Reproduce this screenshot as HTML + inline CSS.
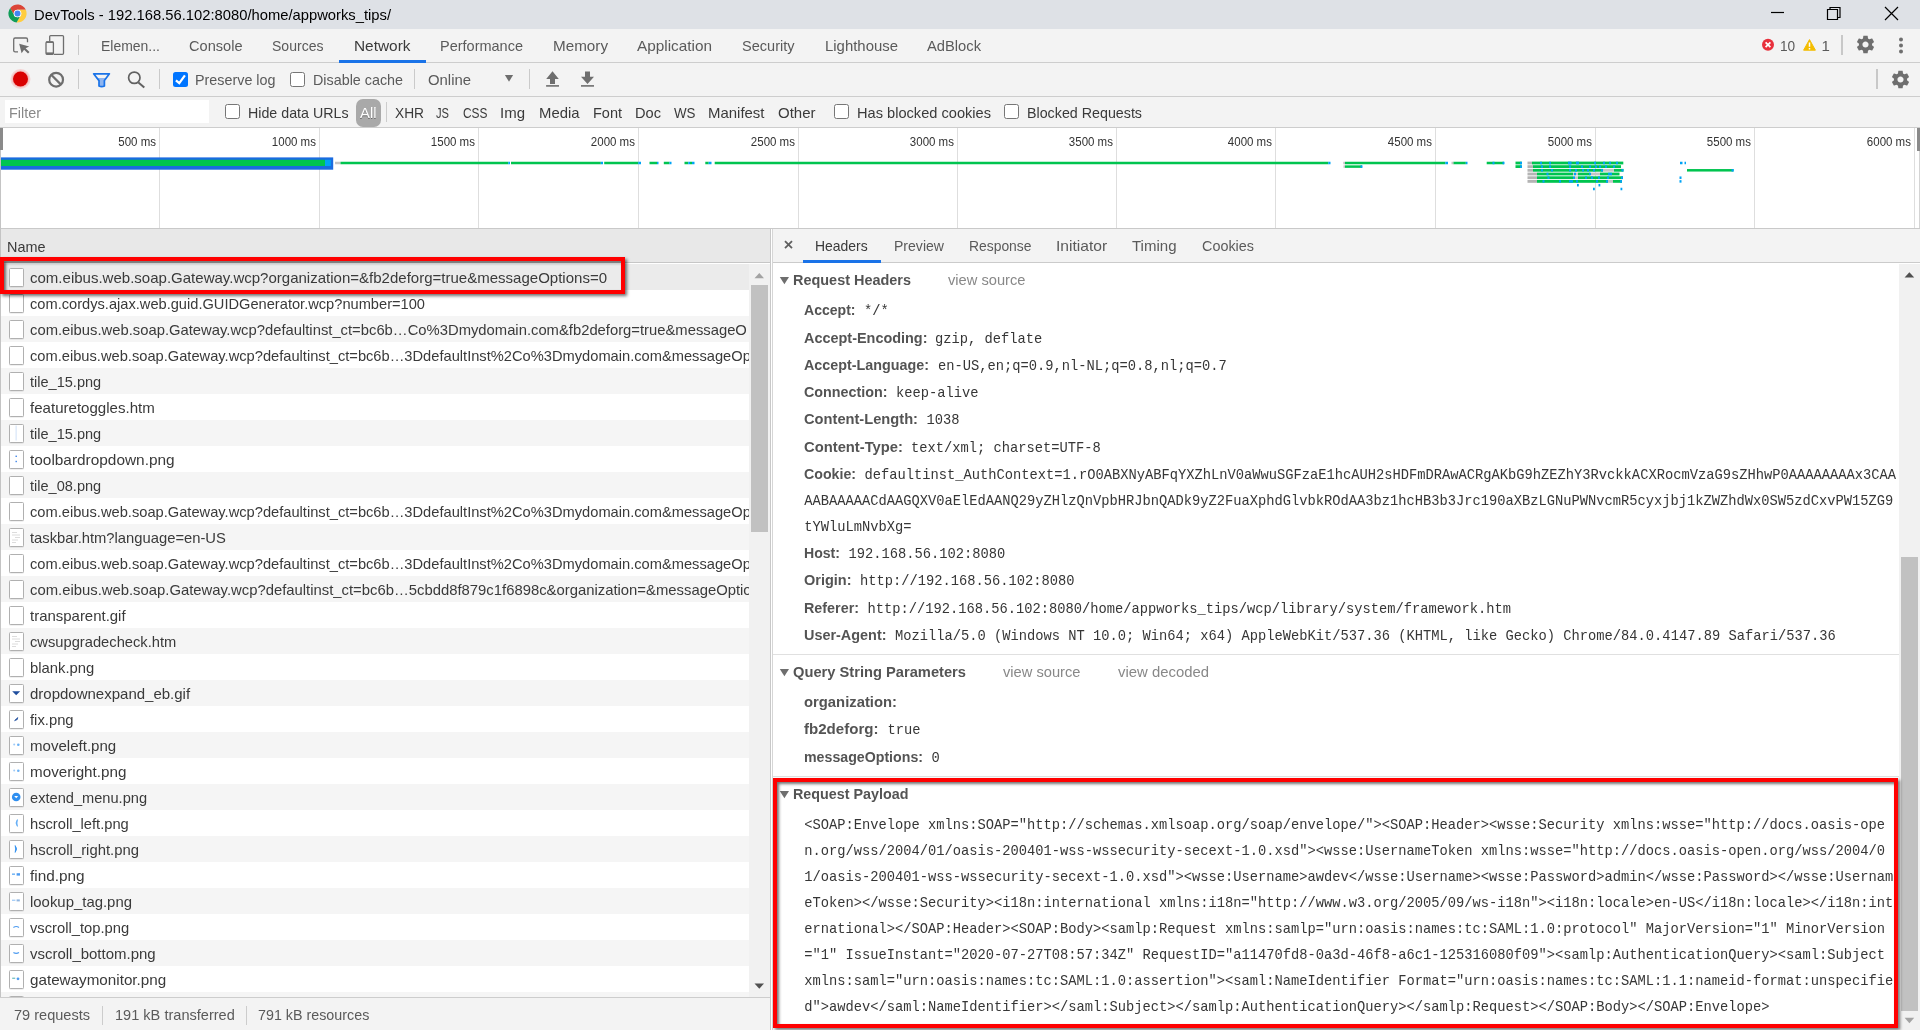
<!DOCTYPE html>
<html lang="en"><head><meta charset="utf-8"><title>DevTools - 192.168.56.102:8080/home/appworks_tips/</title>
<style>
html,body{margin:0;padding:0;}
body{width:1920px;height:1030px;overflow:hidden;background:#fff;position:relative;will-change:transform;font-family:"Liberation Sans",sans-serif;}
div,span,svg{position:absolute;box-sizing:border-box;}
.t{white-space:pre;transform-origin:0 50%;line-height:20px;font-size:15px;color:#3a3a3a;}
.s{font-family:"Liberation Sans",sans-serif;}
.b{font-family:"Liberation Sans",sans-serif;font-weight:bold;color:#545454;}
.m{font-family:"Liberation Mono",monospace;font-size:13.75px;color:#363636;}
.g{font-family:"Liberation Sans",sans-serif;font-size:12.5px;color:#333;}
.dim{color:#5a5a5a;}
.lt{color:#888;}
.wh{color:#fff;}
.ico{border:1.2px solid #b0b0b0;background:#fff;border-radius:1.5px;box-shadow:0 .6px 0 rgba(0,0,0,.12);}
</style></head>
<body>
<div style="left:0;top:0;width:1920px;height:28.5px;background:#dee1e6"></div>
<div style="left:0;top:28.5px;width:1920px;height:34.5px;background:#f3f3f3;border-bottom:1px solid #cdcdcd"></div>
<div style="left:0;top:63px;width:1920px;height:34px;background:#f3f3f3;border-bottom:1px solid #cdcdcd"></div>
<div style="left:0;top:97px;width:1920px;height:31px;background:#f3f3f3;border-bottom:1px solid #cdcdcd"></div>
<div style="left:5px;top:100px;width:204px;height:23px;background:#fff"></div>
<svg style="left:8.1px;top:4.1px" width="19" height="19" viewBox="1 1 46 46">
<path d="M16.21 28.5L6.17 11.12A22 22 0 0 1 44.07 15L24 15A9 9 0 0 0 16.21 28.5Z" fill="#db4437"/>
<path d="M24 15L44.07 15A22 22 0 0 1 21.76 45.88L31.79 28.5A9 9 0 0 0 24 15Z" fill="#ffcd40"/>
<path d="M31.79 28.5L21.76 45.88A22 22 0 0 1 6.17 11.12L16.21 28.5A9 9 0 0 0 31.79 28.5Z" fill="#0f9d58"/>
<circle cx="24" cy="24" r="9.3" fill="#fff"/><circle cx="24" cy="24" r="7.2" fill="#4285f4"/></svg>
<svg style="left:1760px;top:0" width="160" height="29"><g stroke="#000" stroke-width="1.2" fill="none"><path d="M11 12.5H24"/><path d="M67.5 9.5H77.5V19.5H67.5Z"/><path d="M70 9.5V7.5H80V17.5H77.5"/><path d="M125 7L138 20M138 7L125 20"/></g></svg>
<div style="left:338.5px;top:60px;width:87px;height:2.5px;background:#1a73e8"></div>
<svg style="left:0;top:29px" width="80" height="34" viewBox="0 29 80 34" fill="none" stroke="#6e6e6e" stroke-width="1.3">
<path d="M27.5 42.2V39.4Q27.5 38 26.1 38H15.1Q13.7 38 13.7 39.4V50.4Q13.7 51.8 15.1 51.8H18"/>
<path d="M19.2 43.8L29.2 46.4L25.6 48.2L29.5 52.1L28 53.6L24.1 49.7L21.6 53.2Z" fill="#6e6e6e" stroke="none"/>
<path d="M49.7 41.5V36.6Q49.7 35.6 50.7 35.6H62.5Q63.5 35.6 63.5 36.6V53.3Q63.5 54.3 62.5 54.3H54"/>
<rect x="46" y="41.9" width="7.4" height="12.4" rx="1"/><path d="M46 53.4H53.4" stroke-width="2"/><path d="M46 42.2H53.4" stroke-width="1.6"/></svg>
<div style="left:77.9px;top:35px;width:1px;height:20px;background:#cacaca"></div>
<svg style="left:1760px;top:34px" width="160" height="24" viewBox="0 0 160 24">
<circle cx="8" cy="10.8" r="6" fill="#e8303c"/><path d="M5.6 8.4L10.4 13.2M10.4 8.4L5.6 13.2" stroke="#fff" stroke-width="1.7"/>
<path d="M49.5 5.6L55.4 16.2H43.6Z" fill="#f4bd00" stroke="#f4bd00" stroke-width="1" stroke-linejoin="round"/>
<path d="M49.5 8.6V12.8M49.5 13.9V15.4" stroke="#fff" stroke-width="1.5"/>
</svg>
<div style="left:1841.2px;top:35px;width:1.5px;height:20px;background:#c8c8c8"></div>
<svg style="left:1854.7px;top:34.3px" width="21" height="21" viewBox="0 0 24 24"><path fill="#6e6e6e" d="M19.43 12.98c.04-.32.07-.64.07-.98s-.03-.66-.07-.98l2.11-1.65c.19-.15.24-.42.12-.64l-2-3.46c-.12-.22-.39-.3-.61-.22l-2.49 1c-.52-.4-1.08-.73-1.69-.98l-.38-2.65C14.46 2.18 14.25 2 14 2h-4c-.25 0-.46.18-.49.42l-.38 2.65c-.61.25-1.17.59-1.69.98l-2.49-1c-.23-.09-.49 0-.61.22l-2 3.46c-.13.22-.07.49.12.64l2.11 1.65c-.04.32-.07.65-.07.98s.03.66.07.98l-2.11 1.65c-.19.15-.24.42-.12.64l2 3.46c.12.22.39.3.61.22l2.49-1c.52.4 1.08.73 1.69.98l.38 2.65c.03.24.24.42.49.42h4c.25 0 .46-.18.49-.42l.38-2.65c.61-.25 1.17-.59 1.69-.98l2.49 1c.23.09.49 0 .61-.22l2-3.46c.12-.22.07-.49-.12-.64l-2.11-1.65zM12 15.5c-1.93 0-3.5-1.57-3.5-3.5s1.57-3.5 3.5-3.5 3.5 1.57 3.5 3.5-1.57 3.5-3.5 3.5z"/></svg>
<svg style="left:1896px;top:35px" width="10" height="20"><g fill="#6e6e6e"><circle cx="5" cy="4.5" r="2"/><circle cx="5" cy="10.5" r="2"/><circle cx="5" cy="16.5" r="2"/></g></svg>
<svg style="left:0;top:63px" width="620" height="34" viewBox="0 63 620 34">
<circle cx="20.5" cy="79" r="10" fill="#f00" opacity=".13"/><circle cx="20.5" cy="79" r="8.6" fill="#f00" opacity=".12"/><circle cx="20.5" cy="79" r="7.5" fill="#d90000"/>
<circle cx="56.1" cy="79.7" r="6.9" fill="none" stroke="#6e6e6e" stroke-width="2.2"/><path d="M51.2 74.8L61 84.6" stroke="#6e6e6e" stroke-width="2.2"/>
<path d="M96.5 78H106.5L104.4 81V86.2Q101.7 87.6 99 86.2V81Z" fill="#8eb5f0"/>
<path d="M93.6 73.8H109.4L104.4 80.6V86Q101.7 87.4 99 86V80.6Z" fill="none" stroke="#1a73e8" stroke-width="1.7" stroke-linejoin="round"/>
<circle cx="134.3" cy="77.75" r="5.7" fill="none" stroke="#616161" stroke-width="1.7"/><path d="M138.4 82.4L144.3 87.6" stroke="#616161" stroke-width="2"/>
<path d="M504.9 75H513.1L509 81.8Z" fill="#6e6e6e"/>
<path d="M552.5 71.2L558.8 78.9H555V83.9H550V78.9H546.2Z" fill="#6e6e6e"/><rect x="546.1" y="85.1" width="12.9" height="1.6" fill="#6e6e6e"/>
<path d="M587.5 83.9L594 76.7H590V71.4H585V76.7H581Z" fill="#6e6e6e"/><rect x="581" y="85.1" width="13" height="1.6" fill="#6e6e6e"/>
</svg>
<div style="left:77.9px;top:69px;width:1px;height:20px;background:#cacaca"></div>
<div style="left:158.9px;top:69px;width:1px;height:20px;background:#cacaca"></div>
<div style="left:413.9px;top:69px;width:1px;height:20px;background:#cacaca"></div>
<div style="left:528.9px;top:69px;width:1px;height:20px;background:#cacaca"></div>
<div style="left:1876.1px;top:69px;width:1.5px;height:20px;background:#c8c8c8"></div>
<svg style="left:1890px;top:68.5px" width="21" height="21" viewBox="0 0 24 24"><path fill="#6e6e6e" d="M19.43 12.98c.04-.32.07-.64.07-.98s-.03-.66-.07-.98l2.11-1.65c.19-.15.24-.42.12-.64l-2-3.46c-.12-.22-.39-.3-.61-.22l-2.49 1c-.52-.4-1.08-.73-1.69-.98l-.38-2.65C14.46 2.18 14.25 2 14 2h-4c-.25 0-.46.18-.49.42l-.38 2.65c-.61.25-1.17.59-1.69.98l-2.49-1c-.23-.09-.49 0-.61.22l-2 3.46c-.13.22-.07.49.12.64l2.11 1.65c-.04.32-.07.65-.07.98s.03.66.07.98l-2.11 1.65c-.19.15-.24.42-.12.64l2 3.46c.12.22.39.3.61.22l2.49-1c.52.4 1.08.73 1.69.98l.38 2.65c.03.24.24.42.49.42h4c.25 0 .46-.18.49-.42l.38-2.65c.61-.25 1.17-.59 1.69-.98l2.49 1c.23.09.49 0 .61-.22l2-3.46c.12-.22.07-.49-.12-.64l-2.11-1.65zM12 15.5c-1.93 0-3.5-1.57-3.5-3.5s1.57-3.5 3.5-3.5 3.5 1.57 3.5 3.5-1.57 3.5-3.5 3.5z"/></svg>
<svg style="left:173px;top:72px" width="15" height="15" viewBox="0 0 15 15"><rect width="15" height="15" rx="2.5" fill="#0075ff"/><path d="M2.9 8.3L6.3 11.2L11.9 3.4" stroke="#fff" stroke-width="2.2" fill="none"/></svg>
<div style="left:290px;top:72px;width:15px;height:15px;border:1.25px solid #767676;border-radius:2.5px;background:#fff"></div>
<div style="left:225px;top:104px;width:15px;height:15px;border:1.25px solid #767676;border-radius:2.5px;background:#fff"></div>
<div style="left:356px;top:99px;width:25px;height:28px;background:#a9a9a9;border-radius:7px"></div>
<div style="left:386px;top:102px;width:1px;height:20px;background:#ccc"></div>
<div style="left:834px;top:104px;width:15px;height:15px;border:1.25px solid #767676;border-radius:2.5px;background:#fff"></div>
<div style="left:1004px;top:104px;width:15px;height:15px;border:1.25px solid #767676;border-radius:2.5px;background:#fff"></div>
<div style="left:0;top:128px;width:1920px;height:100px;background:#fff"></div>
<div style="left:0;top:228px;width:1920px;height:1.3px;background:#c9c9c9"></div>
<div style="left:159px;top:128px;width:1px;height:100px;background:#dedede"></div>
<div style="left:319px;top:128px;width:1px;height:100px;background:#dedede"></div>
<div style="left:478px;top:128px;width:1px;height:100px;background:#dedede"></div>
<div style="left:638px;top:128px;width:1px;height:100px;background:#dedede"></div>
<div style="left:798px;top:128px;width:1px;height:100px;background:#dedede"></div>
<div style="left:957px;top:128px;width:1px;height:100px;background:#dedede"></div>
<div style="left:1116px;top:128px;width:1px;height:100px;background:#dedede"></div>
<div style="left:1275px;top:128px;width:1px;height:100px;background:#dedede"></div>
<div style="left:1435px;top:128px;width:1px;height:100px;background:#dedede"></div>
<div style="left:1595px;top:128px;width:1px;height:100px;background:#dedede"></div>
<div style="left:1754px;top:128px;width:1px;height:100px;background:#dedede"></div>
<div style="left:1914px;top:128px;width:1px;height:100px;background:#dedede"></div>
<div style="left:1917px;top:128px;width:3px;height:23px;background:#8a8a8a"></div>
<svg style="left:0;top:128px" width="1920" height="100" viewBox="0 128 1920 100" shape-rendering="auto"><rect x="0" y="157.4" width="333.2" height="12.3" fill="#1a6be0"/><rect x="0" y="159.8" width="325" height="6.2" fill="#00c44f"/><rect x="325" y="159.8" width="5.8" height="6.2" fill="#00a3f5"/><rect x="335" y="161.75" width="5.5" height="2.5" fill="#c4c4c4"/><rect x="340.5" y="161.75" width="167.8" height="2.5" fill="#00c44f"/><rect x="511" y="161.75" width="89.8" height="2.5" fill="#00c44f"/><rect x="604.2" y="161.75" width="34.1" height="2.5" fill="#00c44f"/><rect x="649.5" y="161.75" width="7.5" height="2.5" fill="#00c44f"/><rect x="663.8" y="161.75" width="5.7" height="2.5" fill="#00c44f"/><rect x="684.5" y="161.75" width="3.8" height="2.5" fill="#00c44f"/><rect x="690" y="161.75" width="2.0" height="2.5" fill="#00c44f"/><rect x="705.3" y="161.75" width="3.4" height="2.5" fill="#00c44f"/><rect x="714.7" y="161.75" width="613.6" height="2.5" fill="#00c44f"/><rect x="1345" y="161.75" width="100.3" height="2.5" fill="#00c44f"/><rect x="1453.3" y="161.75" width="12.5" height="2.5" fill="#00c44f"/><rect x="1486.7" y="161.75" width="17.3" height="2.5" fill="#00c44f"/><rect x="1515.5" y="161.60" width="6.2" height="2.8" fill="#00c44f"/><rect x="1532" y="161.60" width="91.3" height="2.8" fill="#00c44f"/><rect x="508.3" y="161.75" width="1.7" height="2.5" fill="#00a3f5"/><rect x="600.8" y="161.75" width="2.2" height="2.5" fill="#00a3f5"/><rect x="638.3" y="161.75" width="2.7" height="2.5" fill="#00a3f5"/><rect x="657" y="161.75" width="1.5" height="2.5" fill="#00a3f5"/><rect x="669.5" y="161.75" width="2.0" height="2.5" fill="#00a3f5"/><rect x="688.3" y="161.75" width="1.7" height="2.5" fill="#00a3f5"/><rect x="692" y="161.75" width="2.5" height="2.5" fill="#00a3f5"/><rect x="708.7" y="161.75" width="2.8" height="2.5" fill="#00a3f5"/><rect x="1328.3" y="161.75" width="2.2" height="2.5" fill="#00a3f5"/><rect x="1445.3" y="161.75" width="2.7" height="2.5" fill="#00a3f5"/><rect x="1465.8" y="161.75" width="1.7" height="2.5" fill="#00a3f5"/><rect x="1492.5" y="161.75" width="2.0" height="2.5" fill="#00a3f5"/><rect x="1502.5" y="161.75" width="2.0" height="2.5" fill="#00a3f5"/><rect x="1520" y="161.75" width="2.0" height="2.5" fill="#00a3f5"/><rect x="1540" y="161.75" width="2.0" height="2.5" fill="#00a3f5"/><rect x="1549" y="161.75" width="2.0" height="2.5" fill="#00a3f5"/><rect x="1568" y="161.60" width="3.5" height="2.8" fill="#00a3f5"/><rect x="1576" y="161.60" width="3.0" height="2.8" fill="#00a3f5"/><rect x="1594" y="161.75" width="2.0" height="2.5" fill="#00a3f5"/><rect x="1603" y="161.75" width="2.0" height="2.5" fill="#00a3f5"/><rect x="1609" y="161.75" width="2.0" height="2.5" fill="#00a3f5"/><rect x="1616" y="161.75" width="2.0" height="2.5" fill="#00a3f5"/><rect x="1680" y="161.75" width="2.5" height="2.5" fill="#00a3f5"/><rect x="1684.5" y="161.75" width="1.5" height="2.5" fill="#00a3f5"/><rect x="1343.3" y="161.75" width="1.7" height="2.5" fill="#c4c4c4"/><rect x="1451.5" y="161.75" width="1.8" height="2.5" fill="#c4c4c4"/><rect x="1527.5" y="161.60" width="4.5" height="2.8" fill="#b4b4b4"/><rect x="1343.5" y="165.35" width="1.5" height="2.5" fill="#c4c4c4"/><rect x="1345" y="165.35" width="17.0" height="2.5" fill="#00c44f"/><rect x="1360.5" y="165.35" width="2.0" height="2.5" fill="#00a3f5"/><rect x="1515.5" y="165.20" width="6.2" height="2.8" fill="#00c44f"/><rect x="1520" y="165.35" width="2.0" height="2.5" fill="#00a3f5"/><rect x="1527.5" y="165.20" width="5.5" height="2.8" fill="#b4b4b4"/><rect x="1533" y="165.20" width="88.0" height="2.8" fill="#00c44f"/><rect x="1541" y="165.35" width="2.0" height="2.5" fill="#00a3f5"/><rect x="1549" y="165.35" width="2.0" height="2.5" fill="#00a3f5"/><rect x="1569" y="165.35" width="2.0" height="2.5" fill="#00a3f5"/><rect x="1581" y="165.35" width="2.0" height="2.5" fill="#00a3f5"/><rect x="1589" y="165.35" width="2.0" height="2.5" fill="#00a3f5"/><rect x="1595" y="165.35" width="2.0" height="2.5" fill="#00a3f5"/><rect x="1599" y="165.35" width="2.0" height="2.5" fill="#00a3f5"/><rect x="1605" y="165.35" width="2.0" height="2.5" fill="#00a3f5"/><rect x="1613" y="165.35" width="2.0" height="2.5" fill="#00a3f5"/><rect x="1527.5" y="168.90" width="5.5" height="2.8" fill="#b4b4b4"/><rect x="1533" y="168.90" width="70.0" height="2.8" fill="#00c44f"/><rect x="1603" y="168.90" width="11.0" height="2.8" fill="#c4c4c4"/><rect x="1614" y="168.90" width="9.5" height="2.8" fill="#00c44f"/><rect x="1541" y="169.05" width="2.0" height="2.5" fill="#00a3f5"/><rect x="1551" y="169.05" width="2.0" height="2.5" fill="#00a3f5"/><rect x="1569" y="169.05" width="2.0" height="2.5" fill="#00a3f5"/><rect x="1575" y="169.05" width="2.0" height="2.5" fill="#00a3f5"/><rect x="1582" y="169.05" width="2.0" height="2.5" fill="#00a3f5"/><rect x="1587" y="169.05" width="2.0" height="2.5" fill="#00a3f5"/><rect x="1593" y="169.05" width="2.0" height="2.5" fill="#00a3f5"/><rect x="1601" y="169.05" width="2.0" height="2.5" fill="#00a3f5"/><rect x="1621.5" y="169.05" width="2.0" height="2.5" fill="#00a3f5"/><rect x="1687" y="169.05" width="46.3" height="2.5" fill="#00c44f"/><rect x="1731.5" y="169.05" width="2.3" height="2.5" fill="#00a3f5"/><rect x="1527.5" y="172.60" width="9.5" height="2.8" fill="#b4b4b4"/><rect x="1537" y="172.60" width="36.0" height="2.8" fill="#00c44f"/><rect x="1573" y="172.60" width="5.0" height="2.8" fill="#c4c4c4"/><rect x="1578" y="172.60" width="12.0" height="2.8" fill="#00c44f"/><rect x="1590" y="172.60" width="10.0" height="2.8" fill="#c4c4c4"/><rect x="1600" y="172.60" width="19.5" height="2.8" fill="#00c44f"/><rect x="1546.5" y="172.75" width="2.0" height="2.5" fill="#00a3f5"/><rect x="1574" y="172.75" width="2.0" height="2.5" fill="#00a3f5"/><rect x="1589" y="172.75" width="2.0" height="2.5" fill="#00a3f5"/><rect x="1608" y="172.75" width="2.0" height="2.5" fill="#00a3f5"/><rect x="1610" y="172.75" width="2.0" height="2.5" fill="#00a3f5"/><rect x="1527.5" y="176.30" width="9.5" height="2.8" fill="#b4b4b4"/><rect x="1537" y="176.30" width="36.0" height="2.8" fill="#00c44f"/><rect x="1573" y="176.30" width="5.0" height="2.8" fill="#c4c4c4"/><rect x="1578" y="176.30" width="45.0" height="2.8" fill="#00c44f"/><rect x="1547.5" y="176.45" width="2.0" height="2.5" fill="#00a3f5"/><rect x="1573" y="176.45" width="2.0" height="2.5" fill="#00a3f5"/><rect x="1585" y="176.45" width="2.0" height="2.5" fill="#00a3f5"/><rect x="1591" y="176.45" width="2.0" height="2.5" fill="#00a3f5"/><rect x="1598" y="176.45" width="2.0" height="2.5" fill="#00a3f5"/><rect x="1607" y="176.45" width="2.0" height="2.5" fill="#00a3f5"/><rect x="1621" y="176.45" width="2.0" height="2.5" fill="#00a3f5"/><rect x="1679.5" y="176.45" width="2.0" height="2.5" fill="#00a3f5"/><rect x="1527.5" y="180.00" width="9.5" height="2.8" fill="#b4b4b4"/><rect x="1537" y="180.00" width="71.0" height="2.8" fill="#00c44f"/><rect x="1608" y="180.00" width="5.0" height="2.8" fill="#c4c4c4"/><rect x="1613" y="180.00" width="9.0" height="2.8" fill="#00c44f"/><rect x="1542.5" y="180.15" width="2.0" height="2.5" fill="#00a3f5"/><rect x="1559" y="180.15" width="2.0" height="2.5" fill="#00a3f5"/><rect x="1569" y="180.15" width="2.0" height="2.5" fill="#00a3f5"/><rect x="1571" y="180.15" width="2.0" height="2.5" fill="#00a3f5"/><rect x="1576" y="180.15" width="2.0" height="2.5" fill="#00a3f5"/><rect x="1596" y="180.15" width="2.0" height="2.5" fill="#00a3f5"/><rect x="1606" y="180.15" width="2.0" height="2.5" fill="#00a3f5"/><rect x="1620" y="180.15" width="2.0" height="2.5" fill="#00a3f5"/><rect x="1679.5" y="180.15" width="2.0" height="2.5" fill="#00a3f5"/><rect x="1577" y="183.95" width="1.8" height="2.5" fill="#00a3f5"/><rect x="1598.5" y="183.95" width="1.8" height="2.5" fill="#00a3f5"/><rect x="1593" y="187.75" width="1.8" height="2.5" fill="#00a3f5"/><rect x="1620.5" y="187.75" width="1.8" height="2.5" fill="#00a3f5"/></svg>
<div style="left:0;top:229.3px;width:770px;height:34px;background:#e8e8e8;border-bottom:1.3px solid #c6c6c6"></div>
<div id="rows" style="left:0;top:263px;width:749px;height:734.4px;overflow:hidden">
<div style="left:0;top:0.6px;width:749px;height:26px;background:#ebebeb"></div>
<div class="ico" style="left:8.6px;top:5.3px;width:15px;height:18.4px"></div>
<div style="left:0;top:26.6px;width:749px;height:26px;background:#fff"></div>
<div class="ico" style="left:8.6px;top:31.3px;width:15px;height:18.4px"></div>
<div style="left:0;top:52.6px;width:749px;height:26px;background:#f5f5f5"></div>
<div class="ico" style="left:8.6px;top:57.3px;width:15px;height:18.4px"></div>
<div style="left:0;top:78.6px;width:749px;height:26px;background:#fff"></div>
<div class="ico" style="left:8.6px;top:83.3px;width:15px;height:18.4px"></div>
<div style="left:0;top:104.6px;width:749px;height:26px;background:#f5f5f5"></div>
<div class="ico" style="left:8.6px;top:109.3px;width:15px;height:18.4px"></div>
<div style="left:0;top:130.6px;width:749px;height:26px;background:#fff"></div>
<div class="ico" style="left:8.6px;top:135.3px;width:15px;height:18.4px"></div>
<div style="left:0;top:156.6px;width:749px;height:26px;background:#f5f5f5"></div>
<div class="ico" style="left:8.6px;top:161.3px;width:15px;height:18.4px"></div>
<svg style="left:8.5px;top:161.2px" width="15" height="18" viewBox="0 0 15 18"><rect x="6.6" y="1.5" width="1" height="15" fill="#cfe0f7"/></svg>
<div style="left:0;top:182.6px;width:749px;height:26px;background:#fff"></div>
<div class="ico" style="left:8.6px;top:187.3px;width:15px;height:18.4px"></div>
<svg style="left:8.5px;top:187.2px" width="15" height="18" viewBox="0 0 15 18"><rect x="6.5" y="5.6" width="1.4" height="1.4" fill="#3b82e8"/><rect x="6.5" y="10.8" width="1.4" height="1.4" fill="#3b82e8"/></svg>
<div style="left:0;top:208.6px;width:749px;height:26px;background:#f5f5f5"></div>
<div class="ico" style="left:8.6px;top:213.3px;width:15px;height:18.4px"></div>
<div style="left:0;top:234.6px;width:749px;height:26px;background:#fff"></div>
<div class="ico" style="left:8.6px;top:239.3px;width:15px;height:18.4px"></div>
<div style="left:0;top:260.6px;width:749px;height:26px;background:#f5f5f5"></div>
<div class="ico" style="left:8.6px;top:265.3px;width:15px;height:18.4px"></div>
<svg style="left:8.5px;top:265.2px" width="15" height="18" viewBox="0 0 15 18"><g stroke="#dcdcdc" stroke-width="1"><path d="M3 4.5H8M3 7H11M6 9.5H11M3 12H9M3 14.5H7"/></g></svg>
<div style="left:0;top:286.6px;width:749px;height:26px;background:#fff"></div>
<div class="ico" style="left:8.6px;top:291.3px;width:15px;height:18.4px"></div>
<div style="left:0;top:312.6px;width:749px;height:26px;background:#f5f5f5"></div>
<div class="ico" style="left:8.6px;top:317.3px;width:15px;height:18.4px"></div>
<div style="left:0;top:338.6px;width:749px;height:26px;background:#fff"></div>
<div class="ico" style="left:8.6px;top:343.3px;width:15px;height:18.4px"></div>
<div style="left:0;top:364.6px;width:749px;height:26px;background:#f5f5f5"></div>
<div class="ico" style="left:8.6px;top:369.3px;width:15px;height:18.4px"></div>
<svg style="left:8.5px;top:369.2px" width="15" height="18" viewBox="0 0 15 18"><g stroke="#dcdcdc" stroke-width="1"><path d="M3 4.5H8M3 7H11M6 9.5H11M3 12H9M3 14.5H7"/></g></svg>
<div style="left:0;top:390.6px;width:749px;height:26px;background:#fff"></div>
<div class="ico" style="left:8.6px;top:395.3px;width:15px;height:18.4px"></div>
<div style="left:0;top:416.6px;width:749px;height:26px;background:#f5f5f5"></div>
<div class="ico" style="left:8.6px;top:421.3px;width:15px;height:18.4px"></div>
<svg style="left:8.5px;top:421.2px" width="15" height="18" viewBox="0 0 15 18"><path d="M3.2 7.2H11.2L7.2 11.2Z" fill="#1f4e9e"/></svg>
<div style="left:0;top:442.6px;width:749px;height:26px;background:#fff"></div>
<div class="ico" style="left:8.6px;top:447.3px;width:15px;height:18.4px"></div>
<svg style="left:8.5px;top:447.2px" width="15" height="18" viewBox="0 0 15 18"><path d="M5.6 10.6L8.8 7.6L8.2 9.6Z" fill="#1f4e9e" stroke="#1f4e9e" stroke-width=".8"/></svg>
<div style="left:0;top:468.6px;width:749px;height:26px;background:#f5f5f5"></div>
<div class="ico" style="left:8.6px;top:473.3px;width:15px;height:18.4px"></div>
<svg style="left:8.5px;top:473.2px" width="15" height="18" viewBox="0 0 15 18"><circle cx="5.2" cy="8.6" r="1" fill="#9cc9f7"/><circle cx="9.3" cy="8.8" r="1.3" fill="#6cb2f5"/></svg>
<div style="left:0;top:494.6px;width:749px;height:26px;background:#fff"></div>
<div class="ico" style="left:8.6px;top:499.3px;width:15px;height:18.4px"></div>
<svg style="left:8.5px;top:499.2px" width="15" height="18" viewBox="0 0 15 18"><circle cx="5.2" cy="8.6" r="1" fill="#9cc9f7"/><circle cx="9.3" cy="8.8" r="1.3" fill="#6cb2f5"/></svg>
<div style="left:0;top:520.6px;width:749px;height:26px;background:#f5f5f5"></div>
<div class="ico" style="left:8.6px;top:525.3px;width:15px;height:18.4px"></div>
<svg style="left:8.5px;top:525.2px" width="15" height="18" viewBox="0 0 15 18"><circle cx="7.2" cy="9" r="4.3" fill="#2f8ff0"/><path d="M5.2 8L7.2 10.3L9.2 8Z" fill="#fff"/></svg>
<div style="left:0;top:546.6px;width:749px;height:26px;background:#fff"></div>
<div class="ico" style="left:8.6px;top:551.3px;width:15px;height:18.4px"></div>
<svg style="left:8.5px;top:551.2px" width="15" height="18" viewBox="0 0 15 18"><path d="M8.4 5.6Q5.6 9 8.4 12.4Q7.6 9 8.4 5.6Z" fill="#63adf5" stroke="#63adf5" stroke-width=".8"/></svg>
<div style="left:0;top:572.6px;width:749px;height:26px;background:#f5f5f5"></div>
<div class="ico" style="left:8.6px;top:577.3px;width:15px;height:18.4px"></div>
<svg style="left:8.5px;top:577.2px" width="15" height="18" viewBox="0 0 15 18"><path d="M6.2 5.6Q9 9 6.2 12.4Q7 9 6.2 5.6Z" fill="#2f8ff0" stroke="#2f8ff0" stroke-width=".8"/></svg>
<div style="left:0;top:598.6px;width:749px;height:26px;background:#fff"></div>
<div class="ico" style="left:8.6px;top:603.3px;width:15px;height:18.4px"></div>
<svg style="left:8.5px;top:603.2px" width="15" height="18" viewBox="0 0 15 18"><rect x="3" y="7.4" width="3" height="1.6" fill="#7ab8f5"/><rect x="7.6" y="7.2" width="3.4" height="2.4" fill="#4f9cf0"/></svg>
<div style="left:0;top:624.6px;width:749px;height:26px;background:#f5f5f5"></div>
<div class="ico" style="left:8.6px;top:629.3px;width:15px;height:18.4px"></div>
<svg style="left:8.5px;top:629.2px" width="15" height="18" viewBox="0 0 15 18"><rect x="3" y="7.6" width="3.4" height="1.4" fill="#a8cff8"/><rect x="7.6" y="7.4" width="3.2" height="2" fill="#8fb5e0"/></svg>
<div style="left:0;top:650.6px;width:749px;height:26px;background:#fff"></div>
<div class="ico" style="left:8.6px;top:655.3px;width:15px;height:18.4px"></div>
<svg style="left:8.5px;top:655.2px" width="15" height="18" viewBox="0 0 15 18"><path d="M4.4 9.4Q7.2 7.6 10 9.4" fill="none" stroke="#4f9cf0" stroke-width="1.2"/></svg>
<div style="left:0;top:676.6px;width:749px;height:26px;background:#f5f5f5"></div>
<div class="ico" style="left:8.6px;top:681.3px;width:15px;height:18.4px"></div>
<svg style="left:8.5px;top:681.2px" width="15" height="18" viewBox="0 0 15 18"><path d="M4.4 8.4Q7.2 10.2 10 8.4" fill="none" stroke="#4f9cf0" stroke-width="1.2"/></svg>
<div style="left:0;top:702.6px;width:749px;height:26px;background:#fff"></div>
<div class="ico" style="left:8.6px;top:707.3px;width:15px;height:18.4px"></div>
<svg style="left:8.5px;top:707.2px" width="15" height="18" viewBox="0 0 15 18"><rect x="3.2" y="7.6" width="3" height="1.4" fill="#7fc4c4"/><circle cx="9" cy="8.8" r="1.4" fill="#4f9cf0"/></svg>
<div style="left:0;top:728.6px;width:749px;height:26px;background:#f5f5f5"></div>
<div class="ico" style="left:8.6px;top:733.3px;width:15px;height:18.4px"></div>
<span id="t45" class="t s" style="left:30.40px;top:5.00px;transform:scaleX(1.0012);">com.eibus.web.soap.Gateway.wcp?organization=&amp;fb2deforg=true&amp;messageOptions=0</span>
<span id="t46" class="t s" style="left:30.40px;top:31.00px;transform:scaleX(0.9758);">com.cordys.ajax.web.guid.GUIDGenerator.wcp?number=100</span>
<span id="t47" class="t s" style="left:30.40px;top:57.00px;transform:scaleX(0.9864);">com.eibus.web.soap.Gateway.wcp?defaultinst_ct=bc6b…Co%3Dmydomain.com&amp;fb2deforg=true&amp;messageO</span>
<span id="t48" class="t s" style="left:30.40px;top:83.00px;transform:scaleX(0.9778);">com.eibus.web.soap.Gateway.wcp?defaultinst_ct=bc6b…3DdefaultInst%2Co%3Dmydomain.com&amp;messageOp</span>
<span id="t49" class="t s" style="left:30.40px;top:109.00px;transform:scaleX(0.9699);">tile_15.png</span>
<span id="t50" class="t s" style="left:30.40px;top:135.00px;transform:scaleX(1.0044);">featuretoggles.htm</span>
<span id="t51" class="t s" style="left:30.40px;top:161.00px;transform:scaleX(0.9699);">tile_15.png</span>
<span id="t52" class="t s" style="left:30.40px;top:187.00px;transform:scaleX(1.0259);">toolbardropdown.png</span>
<span id="t53" class="t s" style="left:30.40px;top:213.00px;transform:scaleX(0.9699);">tile_08.png</span>
<span id="t54" class="t s" style="left:30.40px;top:239.00px;transform:scaleX(0.9778);">com.eibus.web.soap.Gateway.wcp?defaultinst_ct=bc6b…3DdefaultInst%2Co%3Dmydomain.com&amp;messageOp</span>
<span id="t55" class="t s" style="left:30.40px;top:265.00px;transform:scaleX(0.9850);">taskbar.htm?language=en-US</span>
<span id="t56" class="t s" style="left:30.40px;top:291.00px;transform:scaleX(0.9778);">com.eibus.web.soap.Gateway.wcp?defaultinst_ct=bc6b…3DdefaultInst%2Co%3Dmydomain.com&amp;messageOp</span>
<span id="t57" class="t s" style="left:30.40px;top:317.00px;transform:scaleX(0.9894);">com.eibus.web.soap.Gateway.wcp?defaultinst_ct=bc6b…5cbdd8f879c1f6898c&amp;organization=&amp;messageOptio</span>
<span id="t58" class="t s" style="left:30.40px;top:343.00px;transform:scaleX(0.9970);">transparent.gif</span>
<span id="t59" class="t s" style="left:30.40px;top:369.00px;transform:scaleX(0.9802);">cwsupgradecheck.htm</span>
<span id="t60" class="t s" style="left:30.40px;top:395.00px;transform:scaleX(0.9883);">blank.png</span>
<span id="t61" class="t s" style="left:30.40px;top:421.00px;transform:scaleX(0.9997);">dropdownexpand_eb.gif</span>
<span id="t62" class="t s" style="left:30.40px;top:447.00px;transform:scaleX(0.9864);">fix.png</span>
<span id="t63" class="t s" style="left:30.40px;top:473.00px;transform:scaleX(1.0036);">moveleft.png</span>
<span id="t64" class="t s" style="left:30.40px;top:499.00px;transform:scaleX(1.0141);">moveright.png</span>
<span id="t65" class="t s" style="left:30.40px;top:525.00px;transform:scaleX(0.9749);">extend_menu.png</span>
<span id="t66" class="t s" style="left:30.40px;top:551.00px;transform:scaleX(0.9791);">hscroll_left.png</span>
<span id="t67" class="t s" style="left:30.40px;top:577.00px;transform:scaleX(0.9894);">hscroll_right.png</span>
<span id="t68" class="t s" style="left:30.40px;top:603.00px;transform:scaleX(1.0227);">find.png</span>
<span id="t69" class="t s" style="left:30.40px;top:629.00px;transform:scaleX(0.9942);">lookup_tag.png</span>
<span id="t70" class="t s" style="left:30.40px;top:655.00px;transform:scaleX(0.9831);">vscroll_top.png</span>
<span id="t71" class="t s" style="left:30.40px;top:681.00px;transform:scaleX(0.9976);">vscroll_bottom.png</span>
<span id="t72" class="t s" style="left:30.40px;top:707.00px;transform:scaleX(1.0144);">gatewaymonitor.png</span>
</div>
<div style="left:749px;top:263.6px;width:21px;height:734px;background:#f1f1f1"></div>
<div style="left:751px;top:285px;width:17px;height:247px;background:#c1c1c1"></div>
<svg style="left:749px;top:263.6px" width="20" height="734"><path d="M5.5 14.2L10.3 9L15 14.2Z" fill="#a3a3a3"/><path d="M5.5 719.5L10.3 724.7L15 719.5Z" fill="#505050"/></svg>
<div style="left:770px;top:229.3px;width:3px;height:801px;background:#fff"></div>
<div style="left:770px;top:229.3px;width:1px;height:801px;background:#c8c8c8"></div>
<div style="left:772px;top:229.3px;width:1px;height:801px;background:#d6d6d6"></div>
<div style="left:0;top:128px;width:1px;height:902px;background:#c4c4c4"></div>
<div style="left:0;top:128px;width:2.5px;height:22px;background:#8a8a8a"></div>
<div style="left:1919px;top:151px;width:1px;height:77px;background:#d4d4d4"></div>
<div style="left:0;top:997.4px;width:770px;height:33px;background:#f3f3f3;border-top:1.3px solid #cdcdcd"></div>
<div style="left:101.5px;top:1006px;width:1.2px;height:19px;background:#ccc"></div>
<div style="left:246px;top:1006px;width:1.2px;height:19px;background:#ccc"></div>
<div style="left:773px;top:229.3px;width:1147px;height:34.2px;background:#f3f3f3;border-bottom:1.3px solid #cbcbcb"></div>
<div style="left:773px;top:263.1px;width:1126px;height:767px;background:#fff"></div>
<svg style="left:782px;top:238px" width="14" height="14"><path d="M3 3.2L10 10.2M10 3.2L3 10.2" stroke="#5f5f5f" stroke-width="1.8"/></svg>
<div style="left:803px;top:260px;width:78px;height:3px;background:#1a73e8"></div>
<div style="left:1899px;top:264.4px;width:21px;height:766px;background:#f1f1f1"></div>
<div style="left:1901px;top:557px;width:17px;height:453.5px;background:#c1c1c1"></div>
<svg style="left:1899px;top:264.4px" width="21" height="766"><path d="M5.6 13.6L10.4 8.3L15.2 13.6Z" fill="#505050"/><path d="M5.6 753.8L10.4 759.2L15.2 753.8Z" fill="#a3a3a3"/></svg>
<svg style="left:780px;top:277px;overflow:visible" width="11" height="10"><path d="M-0.2 0H9L4.4 7.2Z" fill="#6e6e6e"/></svg>
<div style="left:773px;top:654px;width:1126px;height:1px;background:#e0e0e0"></div>
<svg style="left:780px;top:669px;overflow:visible" width="11" height="10"><path d="M-0.2 0H9L4.4 7.2Z" fill="#6e6e6e"/></svg>
<div style="left:773px;top:776px;width:1126px;height:1px;background:#e0e0e0"></div>
<svg style="left:780px;top:791px;overflow:visible" width="11" height="10"><path d="M-0.2 0H9L4.4 7.2Z" fill="#6e6e6e"/></svg>
<div style="left:0;top:257px;width:625px;height:37px;border:4px solid #f00;box-shadow:2px 2px 3px rgba(0,0,0,.55), inset 2px 2px 3px rgba(0,0,0,.55)"></div>
<div style="left:773px;top:778px;width:1125px;height:250px;border:4px solid #f00;box-shadow:2px 2px 3px rgba(0,0,0,.55), inset 2px 2px 3px rgba(0,0,0,.55)"></div>
<span id="t1" class="t s" style="left:34.00px;top:5.00px;transform:scaleX(0.9842);color:#000;">DevTools - 192.168.56.102:8080/home/appworks_tips/</span>
<span id="t2" class="t s dim" style="left:101.00px;top:36.00px;transform:scaleX(0.9310);">Elemen...</span>
<span id="t3" class="t s dim" style="left:189.00px;top:36.00px;transform:scaleX(0.9719);">Console</span>
<span id="t4" class="t s dim" style="left:272.00px;top:36.00px;transform:scaleX(0.9358);">Sources</span>
<span id="t5" class="t s" style="left:353.50px;top:36.00px;transform:scaleX(1.0270);">Network</span>
<span id="t6" class="t s dim" style="left:439.50px;top:36.00px;transform:scaleX(0.9665);">Performance</span>
<span id="t7" class="t s dim" style="left:552.50px;top:36.00px;transform:scaleX(1.0153);">Memory</span>
<span id="t8" class="t s dim" style="left:637.00px;top:36.00px;transform:scaleX(1.0219);">Application</span>
<span id="t9" class="t s dim" style="left:742.00px;top:36.00px;transform:scaleX(0.9689);">Security</span>
<span id="t10" class="t s dim" style="left:824.50px;top:36.00px;transform:scaleX(0.9945);">Lighthouse</span>
<span id="t11" class="t s dim" style="left:927.00px;top:36.00px;transform:scaleX(0.9813);">AdBlock</span>
<span id="t12" class="t s dim" style="left:1780.30px;top:36.00px;transform:scaleX(0.9109);">10</span>
<span id="t13" class="t s dim" style="left:1821.50px;top:36.00px;">1</span>
<span id="t14" class="t s dim" style="left:195.00px;top:70.00px;transform:scaleX(0.9558);">Preserve log</span>
<span id="t15" class="t s dim" style="left:312.50px;top:70.00px;transform:scaleX(0.9552);">Disable cache</span>
<span id="t16" class="t s dim" style="left:428.00px;top:70.00px;transform:scaleX(0.9917);">Online</span>
<span id="t17" class="t s lt" style="left:9.00px;top:103.00px;transform:scaleX(0.9597);">Filter</span>
<span id="t18" class="t s" style="left:248.00px;top:103.00px;transform:scaleX(0.9491);">Hide data URLs</span>
<span id="t19" class="t s wh" style="left:359.50px;top:103.00px;transform:scaleX(0.9897);text-shadow:0 1px 0 rgba(0,0,0,.4);">All</span>
<span id="t20" class="t s" style="left:395.00px;top:103.00px;transform:scaleX(0.9156);">XHR</span>
<span id="t21" class="t s" style="left:436.00px;top:103.00px;transform:scaleX(0.7422);">JS</span>
<span id="t22" class="t s" style="left:462.50px;top:103.00px;transform:scaleX(0.7943);">CSS</span>
<span id="t23" class="t s" style="left:500.00px;top:103.00px;transform:scaleX(0.9994);">Img</span>
<span id="t24" class="t s" style="left:538.50px;top:103.00px;transform:scaleX(0.9912);">Media</span>
<span id="t25" class="t s" style="left:592.50px;top:103.00px;transform:scaleX(0.9662);">Font</span>
<span id="t26" class="t s" style="left:634.50px;top:103.00px;transform:scaleX(0.9742);">Doc</span>
<span id="t27" class="t s" style="left:673.50px;top:103.00px;transform:scaleX(0.8895);">WS</span>
<span id="t28" class="t s" style="left:708.00px;top:103.00px;transform:scaleX(0.9964);">Manifest</span>
<span id="t29" class="t s" style="left:777.50px;top:103.00px;transform:scaleX(0.9996);">Other</span>
<span id="t30" class="t s" style="left:857.00px;top:103.00px;transform:scaleX(0.9740);">Has blocked cookies</span>
<span id="t31" class="t s" style="left:1027.00px;top:103.00px;transform:scaleX(0.9512);">Blocked Requests</span>
<span id="t32" class="t g" style="left:0.00px;top:132.00px;left:auto;right:1764.0px;transform-origin:100% 50%;transform:scaleX(.92);">500 ms</span>
<span id="t33" class="t g" style="left:0.00px;top:132.00px;left:auto;right:1604.0px;transform-origin:100% 50%;transform:scaleX(.92);">1000 ms</span>
<span id="t34" class="t g" style="left:0.00px;top:132.00px;left:auto;right:1445.0px;transform-origin:100% 50%;transform:scaleX(.92);">1500 ms</span>
<span id="t35" class="t g" style="left:0.00px;top:132.00px;left:auto;right:1285.0px;transform-origin:100% 50%;transform:scaleX(.92);">2000 ms</span>
<span id="t36" class="t g" style="left:0.00px;top:132.00px;left:auto;right:1125.0px;transform-origin:100% 50%;transform:scaleX(.92);">2500 ms</span>
<span id="t37" class="t g" style="left:0.00px;top:132.00px;left:auto;right:966.0px;transform-origin:100% 50%;transform:scaleX(.92);">3000 ms</span>
<span id="t38" class="t g" style="left:0.00px;top:132.00px;left:auto;right:807.0px;transform-origin:100% 50%;transform:scaleX(.92);">3500 ms</span>
<span id="t39" class="t g" style="left:0.00px;top:132.00px;left:auto;right:648.0px;transform-origin:100% 50%;transform:scaleX(.92);">4000 ms</span>
<span id="t40" class="t g" style="left:0.00px;top:132.00px;left:auto;right:488.0px;transform-origin:100% 50%;transform:scaleX(.92);">4500 ms</span>
<span id="t41" class="t g" style="left:0.00px;top:132.00px;left:auto;right:328.0px;transform-origin:100% 50%;transform:scaleX(.92);">5000 ms</span>
<span id="t42" class="t g" style="left:0.00px;top:132.00px;left:auto;right:169.0px;transform-origin:100% 50%;transform:scaleX(.92);">5500 ms</span>
<span id="t43" class="t g" style="left:0.00px;top:132.00px;left:auto;right:9.0px;transform-origin:100% 50%;transform:scaleX(.92);">6000 ms</span>
<span id="t44" class="t s" style="left:6.90px;top:237.00px;transform:scaleX(0.9621);">Name</span>
<span id="t73" class="t s dim" style="left:13.80px;top:1005.00px;transform:scaleX(0.9695);">79 requests</span>
<span id="t74" class="t s dim" style="left:114.60px;top:1005.00px;transform:scaleX(0.9708);">191 kB transferred</span>
<span id="t75" class="t s dim" style="left:258.40px;top:1005.00px;transform:scaleX(0.9534);">791 kB resources</span>
<span id="t76" class="t s" style="left:815.30px;top:236.00px;transform:scaleX(0.9294);">Headers</span>
<span id="t77" class="t s dim" style="left:894.00px;top:236.00px;transform:scaleX(0.9370);">Preview</span>
<span id="t78" class="t s dim" style="left:968.50px;top:236.00px;transform:scaleX(0.9253);">Response</span>
<span id="t79" class="t s dim" style="left:1055.80px;top:236.00px;transform:scaleX(1.0406);">Initiator</span>
<span id="t80" class="t s dim" style="left:1132.00px;top:236.00px;transform:scaleX(1.0011);">Timing</span>
<span id="t81" class="t s dim" style="left:1202.00px;top:236.00px;transform:scaleX(0.9594);">Cookies</span>
<span id="t82" class="t b" style="left:793.00px;top:270.00px;transform:scaleX(0.9628);">Request Headers</span>
<span id="t83" class="t s lt" style="left:948.00px;top:270.00px;transform:scaleX(0.9785);">view source</span>
<span id="t84" class="t b" style="left:804.20px;top:300.00px;transform:scaleX(0.9361);">Accept:</span>
<span id="t85" class="t m" style="left:864.00px;top:302.00px;">*/*</span>
<span id="t86" class="t b" style="left:804.20px;top:328.00px;transform:scaleX(0.9623);">Accept-Encoding:</span>
<span id="t87" class="t m" style="left:935.00px;top:330.00px;">gzip, deflate</span>
<span id="t88" class="t b" style="left:804.20px;top:355.00px;transform:scaleX(0.9552);">Accept-Language:</span>
<span id="t89" class="t m" style="left:938.00px;top:357.00px;">en-US,en;q=0.9,nl-NL;q=0.8,nl;q=0.7</span>
<span id="t90" class="t b" style="left:804.20px;top:382.00px;transform:scaleX(0.9543);">Connection:</span>
<span id="t91" class="t m" style="left:896.00px;top:384.00px;">keep-alive</span>
<span id="t92" class="t b" style="left:804.20px;top:409.00px;transform:scaleX(0.9774);">Content-Length:</span>
<span id="t93" class="t m" style="left:926.50px;top:411.00px;">1038</span>
<span id="t94" class="t b" style="left:804.20px;top:437.00px;transform:scaleX(0.9846);">Content-Type:</span>
<span id="t95" class="t m" style="left:911.00px;top:439.00px;">text/xml; charset=UTF-8</span>
<span id="t96" class="t b" style="left:804.20px;top:464.00px;transform:scaleX(0.9452);">Cookie:</span>
<span id="t97" class="t m" style="left:864.50px;top:466.00px;">defaultinst_AuthContext=1.rO0ABXNyABFqYXZhLnV0aWwuSGFzaE1hcAUH2sHDFmDRAwACRgAKbG9hZEZhY3RvckkACXRocmVzaG9sZHhwP0AAAAAAAAx3CAA</span>
<span id="t98" class="t m" style="left:804.20px;top:492.00px;">AABAAAAACdAAGQXV0aElEdAANQ29yZHlzQnVpbHRJbnQADk9yZ2FuaXphdGlvbkROdAA3bz1hcHB3b3Jrc190aXBzLGNuPWNvcmR5cyxjbj1kZWZhdWx0SW5zdCxvPW15ZG9</span>
<span id="t99" class="t m" style="left:804.20px;top:518.00px;">tYWluLmNvbXg=</span>
<span id="t100" class="t b" style="left:804.20px;top:543.00px;transform:scaleX(0.9393);">Host:</span>
<span id="t101" class="t m" style="left:848.50px;top:545.00px;">192.168.56.102:8080</span>
<span id="t102" class="t b" style="left:804.20px;top:570.00px;transform:scaleX(0.9660);">Origin:</span>
<span id="t103" class="t m" style="left:860.00px;top:572.00px;">http://192.168.56.102:8080</span>
<span id="t104" class="t b" style="left:804.20px;top:598.00px;transform:scaleX(0.9560);">Referer:</span>
<span id="t105" class="t m" style="left:867.50px;top:600.00px;">http://192.168.56.102:8080/home/appworks_tips/wcp/library/system/framework.htm</span>
<span id="t106" class="t b" style="left:804.20px;top:625.00px;transform:scaleX(0.9610);">User-Agent:</span>
<span id="t107" class="t m" style="left:895.00px;top:627.00px;">Mozilla/5.0 (Windows NT 10.0; Win64; x64) AppleWebKit/537.36 (KHTML, like Gecko) Chrome/84.0.4147.89 Safari/537.36</span>
<span id="t108" class="t b" style="left:793.00px;top:662.00px;transform:scaleX(0.9788);">Query String Parameters</span>
<span id="t109" class="t s lt" style="left:1003.30px;top:662.00px;transform:scaleX(0.9785);">view source</span>
<span id="t110" class="t s lt" style="left:1118.00px;top:662.00px;transform:scaleX(0.9920);">view decoded</span>
<span id="t111" class="t b" style="left:804.20px;top:692.00px;transform:scaleX(0.9876);">organization:</span>
<span id="t112" class="t b" style="left:804.20px;top:719.00px;transform:scaleX(1.0044);">fb2deforg:</span>
<span id="t113" class="t m" style="left:887.50px;top:721.00px;">true</span>
<span id="t114" class="t b" style="left:804.20px;top:747.00px;transform:scaleX(0.9454);">messageOptions:</span>
<span id="t115" class="t m" style="left:931.50px;top:749.00px;">0</span>
<span id="t116" class="t b" style="left:793.00px;top:784.00px;transform:scaleX(0.9555);">Request Payload</span>
<span id="t117" class="t m" style="left:804.20px;top:816.00px;">&lt;SOAP:Envelope xmlns:SOAP=&quot;http://schemas.xmlsoap.org/soap/envelope/&quot;&gt;&lt;SOAP:Header&gt;&lt;wsse:Security xmlns:wsse=&quot;http://docs.oasis-ope</span>
<span id="t118" class="t m" style="left:804.20px;top:842.00px;">n.org/wss/2004/01/oasis-200401-wss-wssecurity-secext-1.0.xsd&quot;&gt;&lt;wsse:UsernameToken xmlns:wsse=&quot;http://docs.oasis-open.org/wss/2004/0</span>
<span id="t119" class="t m" style="left:804.20px;top:868.00px;">1/oasis-200401-wss-wssecurity-secext-1.0.xsd&quot;&gt;&lt;wsse:Username&gt;awdev&lt;/wsse:Username&gt;&lt;wsse:Password&gt;admin&lt;/wsse:Password&gt;&lt;/wsse:Usernam</span>
<span id="t120" class="t m" style="left:804.20px;top:894.00px;">eToken&gt;&lt;/wsse:Security&gt;&lt;i18n:international xmlns:i18n=&quot;http://www.w3.org/2005/09/ws-i18n&quot;&gt;&lt;i18n:locale&gt;en-US&lt;/i18n:locale&gt;&lt;/i18n:int</span>
<span id="t121" class="t m" style="left:804.20px;top:920.00px;">ernational&gt;&lt;/SOAP:Header&gt;&lt;SOAP:Body&gt;&lt;samlp:Request xmlns:samlp=&quot;urn:oasis:names:tc:SAML:1.0:protocol&quot; MajorVersion=&quot;1&quot; MinorVersion</span>
<span id="t122" class="t m" style="left:804.20px;top:946.00px;">=&quot;1&quot; IssueInstant=&quot;2020-07-27T08:57:34Z&quot; RequestID=&quot;a11470fd8-0a3d-46f8-a6c1-125316080f09&quot;&gt;&lt;samlp:AuthenticationQuery&gt;&lt;saml:Subject</span>
<span id="t123" class="t m" style="left:804.20px;top:972.00px;">xmlns:saml=&quot;urn:oasis:names:tc:SAML:1.0:assertion&quot;&gt;&lt;saml:NameIdentifier Format=&quot;urn:oasis:names:tc:SAML:1.1:nameid-format:unspecifie</span>
<span id="t124" class="t m" style="left:804.20px;top:998.00px;">d&quot;&gt;awdev&lt;/saml:NameIdentifier&gt;&lt;/saml:Subject&gt;&lt;/samlp:AuthenticationQuery&gt;&lt;/samlp:Request&gt;&lt;/SOAP:Body&gt;&lt;/SOAP:Envelope&gt;</span>
</body></html>
